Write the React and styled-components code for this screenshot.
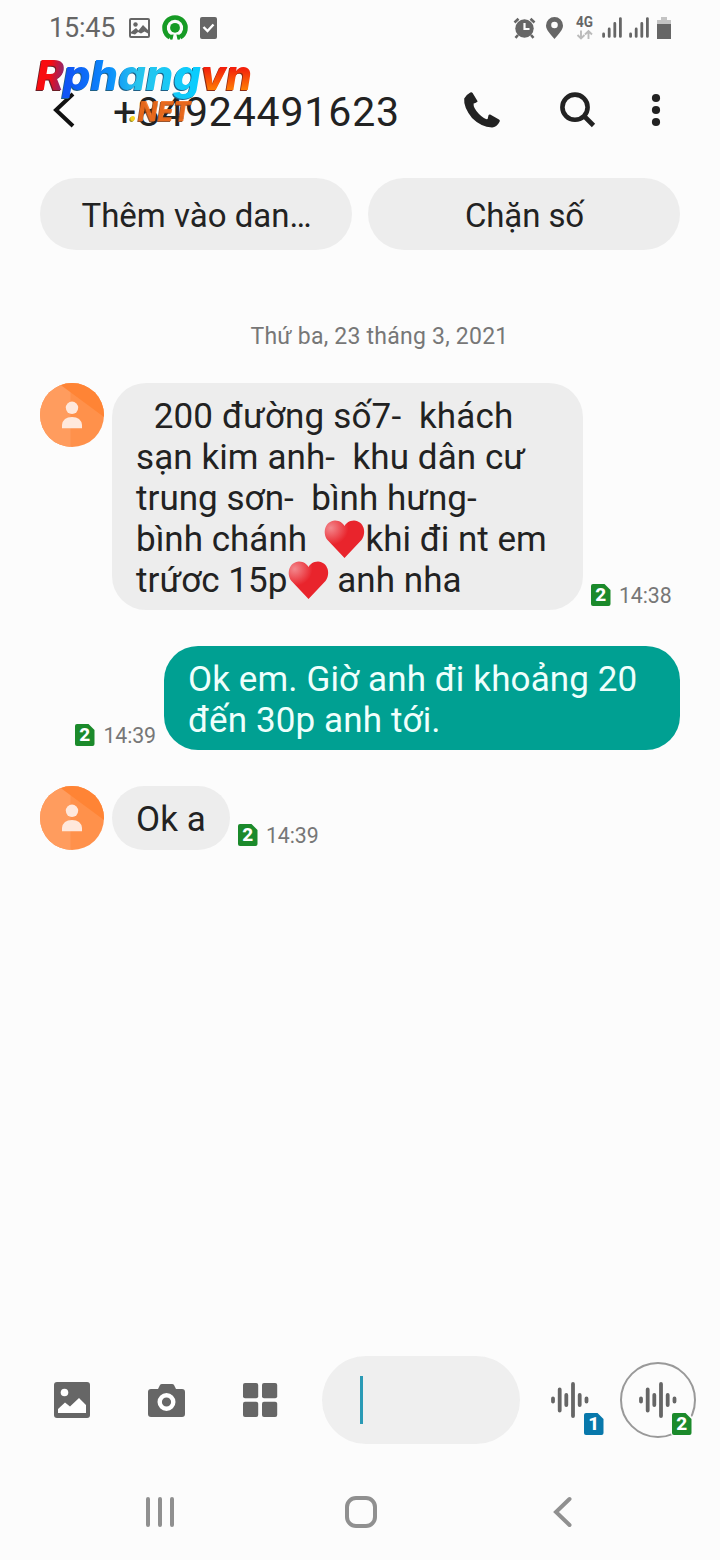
import styled, { createGlobalStyle } from "styled-components"

const GlobalStyle = createGlobalStyle`
    * { box-sizing: border-box; }
    body {
        margin: 0;
        background: #fcfcfc;
        font-family: Roboto, "Liberation Sans", sans-serif;
    }
    svg { display: block; flex: none; overflow: visible; }
    button {
        padding: 0;
        border: none;
        background: none;
        font: inherit;
        color: inherit;
    }
`

const Screen = styled.div`
    position: relative;
    width: 720px;
    height: 1560px;
    display: flex;
    flex-direction: column;
    background: #fcfcfc;
    color: #222;
    overflow: hidden;
`

const StatusBar = styled.div`
    height: 55px;
    padding: 0 46px 0 49px;
    display: flex;
    align-items: center;
    justify-content: space-between;
    color: #666;
`

const StatusGroup = styled.div`
    display: flex;
    align-items: center;
    gap: ${p => p.$gap}px;
`

const Clock = styled.span`
    width: 67px;
    margin-right: 1px;
    font-size: 27px;
    line-height: 32px;
    white-space: nowrap;
    letter-spacing: -0.2px;
`

const Header = styled.header`
    height: 108px;
    margin-top: 1px;
    padding: 0 60px 0 52px;
    display: flex;
    align-items: center;
`

const PhoneNumber = styled.h1`
    width: 348px;
    margin: 4px 0 0 38px;
    font-size: 41px;
    font-weight: 400;
    line-height: 48px;
    letter-spacing: 0.85px;
    white-space: nowrap;
`

const HeaderIcon = styled.button`
    height: 40px;
    margin-left: ${p => p.$left}px;
`

const Watermark = styled.svg`
    position: absolute;
    left: 30px;
    top: 54px;
`

const LogoText = styled.text`
    font-family: Inter, sans-serif;
    font-style: italic;
    font-weight: 800;
    filter: drop-shadow(-0.5px 1px 0 ${p => p.$edge});
`

const Actions = styled.div`
    margin-top: 14px;
    padding: 0 40px;
    display: flex;
    gap: 16px;
`

const ActionButton = styled.button`
    flex: 1;
    height: 72px;
    padding: 2px 0 0 1px;
    border-radius: 36px;
    background: #ededed;
    font-size: 33px;
    letter-spacing: ${p => p.$spacing || 0}px;
`

const Messages = styled.main`
    flex: 1;
    padding: 71px 40px 0;
    display: flex;
    flex-direction: column;
`

const DateLabel = styled.div`
    height: 32px;
    margin: 0 0 30px 39px;
    text-align: center;
    font-size: 23px;
    line-height: 32px;
    letter-spacing: 0.23px;
    color: #777;
`

const Row = styled.div`
    display: flex;
    align-items: flex-start;
    justify-content: ${p => (p.$mine ? "flex-end" : "flex-start")};
    gap: 8px;
    margin-bottom: 36px;
`

const Bubble = styled.div`
    width: ${p => p.$width}px;
    padding: 13px 0 ${p => p.$bottom || 9}px 24px;
    border-radius: 34px;
    background: ${p => (p.$mine ? "#00a092" : "#ededed")};
    color: ${p => (p.$mine ? "#effffc" : "#222")};
    font-size: 35px;
    line-height: 41px;
`

const Line = styled.div`
    height: 41px;
    display: flex;
    white-space: pre;
    letter-spacing: ${p => p.$spacing ?? 0.12}px;
`

const Meta = styled.div`
    align-self: flex-end;
    display: flex;
    align-items: center;
    gap: 8px;
    height: 26px;
    margin-bottom: 2px;
    font-size: 21.3px;
    line-height: 26px;
    letter-spacing: -0.1px;
    color: #777;

    span {
        padding-top: 1px;
    }
`

const Composer = styled.footer`
    height: 88px;
    margin-bottom: 20px;
    padding: 0 24px 0 53px;
    display: flex;
    align-items: center;
`

const Tools = styled.div`
    width: 269px;
    display: flex;
    align-items: center;
    gap: 57px;
`

const Input = styled.div`
    width: 198px;
    height: 88px;
    padding-left: 38px;
    display: flex;
    align-items: center;
    border-radius: 44px;
    background: #efefef;
`

const Caret = styled.span`
    width: 3px;
    height: 48px;
    background: #2a9ab5;
`

const SendButton = styled.button`
    position: relative;
    width: 76px;
    height: 76px;
    margin-left: 12px;
    display: flex;
    align-items: center;
    justify-content: center;
    border-radius: 50%;
    border: 2px solid ${p => (p.$ring ? "#999" : "transparent")};
`

const SendSim = styled.span`
    position: absolute;
    right: 1px;
    bottom: 0;
    background: #fcfcfc;
    padding: 1px;
    border-radius: 3px 9px 3px 3px;
`

const NavBar = styled.nav`
    height: 96px;
    padding-left: 145px;
    display: flex;
    align-items: center;
`

const NavButton = styled.button`
    margin-right: ${p => p.$gap || 0}px;
`

const SimBadge = ({ n }) => (
    <svg width="20" height="22" viewBox="0 0 20 22">
        <path d="M2 0H13.5L19.5 6V20Q19.5 22 17.5 22H2Q0 22 0 20V2Q0 0 2 0Z" fill={n === 1 ? "#0878ab" : "#1b8a2b"} />
        <text x="9.8" y="17.4" textAnchor="middle" fontSize="19" fontWeight="800" letterSpacing="0" fill="#fff">{n}</text>
    </svg>
)

const Avatar = ({ id }) => (
    <svg width="64" height="64" viewBox="0 0 64 64">
        <clipPath id={id}><circle cx="32" cy="32" r="32" /></clipPath>
        <g clipPath={`url(#${id})`}>
            <path d="M0 0H64V64H0Z" fill="#ff914b" />
            <path d="M0 0H20L30.5 8V64H0Z" fill="#ff9c5e" />
            <path d="M18 0H64V34Z" fill="#ff8435" />
        </g>
        <circle cx="32" cy="24.8" r="6.2" fill="#ffe8dc" />
        <path d="M22 45.2V42Q23 34 32 34T42 42V45.2Z" fill="#ffe8dc" />
    </svg>
)

const Heart = () => (
    <svg width="41" height="41" viewBox="0 0 41 41">
        <defs>
            <radialGradient id="heart" cx=".15" cy=".2" r=".45">
                <stop offset="0" stopColor="#f3888d" />
                <stop offset="1" stopColor="#e9242c" />
            </radialGradient>
        </defs>
        <path d="M20.5 39L3.5 21C-2 14 1 2 11 1.5C16 1.5 19 4.5 20.5 7C22 4.5 25 1.5 30 1.5C40 2 43 14 37.5 21Z" fill="url(#heart)" />
    </svg>
)

const Wave = () => (
    <svg width="38" height="36" viewBox="0 0 38 36" stroke="#666" strokeWidth="3.8" strokeLinecap="round">
        <path d="M2 16.5V19.5M8.7 7.5V28.5M15.3 13V23M22 2V34M28.7 13V23M35.5 16.5V19.5" />
    </svg>
)

const Signal = () => (
    <svg width="20" height="21" viewBox="0 0 20 21" stroke="#666" strokeWidth="2.8" strokeLinecap="round">
        <path d="M1.6 17V19.4M7.2 12V19.4M12.8 6.5V19.4M18.4 1.6V19.4" />
    </svg>
)

const LogoPart = ({ x, y, size, length, fill, edge, children }) => (
    <LogoText x={x} y={y} fontSize={size} textLength={length} lengthAdjust="spacingAndGlyphs" fill={fill} $edge={edge}>
        {children}
    </LogoText>
)

const Logo = () => (
    <Watermark width="230" height="76" viewBox="0 0 230 76">
        <defs>
            <linearGradient id="logo-r" gradientUnits="userSpaceOnUse" x1="6" y1="20" x2="35" y2="24">
                <stop offset="0.45" stopColor="#f80c10" />
                <stop offset="1" stopColor="#7d2b7c" />
            </linearGradient>
            <linearGradient id="logo-phang" gradientUnits="userSpaceOnUse" x1="32" y1="0" x2="170" y2="0">
                <stop offset="0.05" stopColor="#0f55f5" />
                <stop offset="0.35" stopColor="#0b90fb" />
                <stop offset="0.55" stopColor="#29c4ec" />
                <stop offset="1" stopColor="#08cdff" />
            </linearGradient>
            <linearGradient id="logo-vn" gradientUnits="userSpaceOnUse" x1="0" y1="14" x2="0" y2="37">
                <stop offset="0" stopColor="#f31f0c" />
                <stop offset="1" stopColor="#ff8204" />
            </linearGradient>
        </defs>
        <LogoPart x={6} y={36} size={41} length={28} fill="url(#logo-r)" edge="#6b1d24">R</LogoPart>
        <LogoPart x={33} y={36} size={41} length={138} fill="url(#logo-phang)" edge="#1d5f86">phang</LogoPart>
        <LogoPart x={171} y={36} size={41} length={51} fill="url(#logo-vn)" edge="#8f2c12">vn</LogoPart>
        <LogoPart x={99} y={67} size={27} length={9} fill="#f4d320" edge="#9a8a20">.</LogoPart>
        <LogoPart x={108} y={67} size={27} length={53} fill="#f26d1be0" edge="#8a3d12">NET</LogoPart>
    </Watermark>
)

const App = () => {
    return (
        <Screen>
            <GlobalStyle />
            <StatusBar>
                <StatusGroup $gap={12}>
                    <Clock>15:45</Clock>
                    <svg width="21" height="20" viewBox="0 0 21 20">
                        <rect x="1" y="1" width="19" height="18" rx="1" fill="none" stroke="#666" strokeWidth="2" />
                        <circle cx="6.5" cy="6.5" r="2.2" fill="#666" />
                        <path d="M2 14L7 10L9.5 12.5L14 7L19 12V15.5L15.5 13.5L12 15.5L9 14L6 16.5L2 15.5Z" fill="#666" />
                    </svg>
                    <svg width="26" height="26" viewBox="0 0 26 26">
                        <path d="M8 22.2A10.5 10.5 0 1 1 18 22.2" fill="none" stroke="#169b25" strokeWidth="4.6" />
                        <circle cx="13" cy="12.8" r="4.9" fill="#169b25" />
                        <path d="M6.5 20L11.6 19.5L10.5 24.5L8.5 24.8ZM19.5 20L14.4 19.5L15.5 24.5L17.5 24.8Z" fill="#169b25" />
                    </svg>
                    <svg width="18" height="22" viewBox="0 0 18 22">
                        <rect width="17" height="22" rx="2" fill="#666" />
                        <path d="M3.5 10L7.5 14L13.5 7.5" fill="none" stroke="#fff" strokeWidth="2.4" />
                    </svg>
                </StatusGroup>
                <StatusGroup $gap={7}>
                    <svg width="23" height="22" viewBox="0 0 23 22">
                        <path d="M1.5 5.5L5.5 1.7M21.5 5.5L17.5 1.7M5 18L2.5 20.8M18 18L20.5 20.8" stroke="#666" strokeWidth="2.6" />
                        <circle cx="11.5" cy="11.5" r="9.2" fill="#666" />
                        <path d="M11.5 6V12H16.5" fill="none" stroke="#fcfcfc" strokeWidth="2.2" />
                    </svg>
                    <svg width="26" height="22" viewBox="0 0 26 22">
                        <path d="M11.5 22C7.5 17 3 13 3 8.5A8.5 8.5 0 0 1 20 8.5C20 13 15.5 17 11.5 22Z" fill="#666" />
                        <circle cx="11.5" cy="8" r="3.3" fill="#fcfcfc" />
                    </svg>
                    <svg width="19" height="24" viewBox="0 0 19 24">
                        <text x="0" y="11" fontSize="14" fontWeight="700" fill="#666" textLength="17" lengthAdjust="spacingAndGlyphs">4G</text>
                        <path d="M5 14.5V22M1.5 19L5 22.5L8.5 19M12.5 23V15.5M9 18.5L12.5 15L16 18.5" fill="none" stroke="#bbb" strokeWidth="1.9" />
                    </svg>
                    <Signal />
                    <Signal />
                    <svg width="18" height="22" viewBox="0 0 18 22">
                        <path d="M5 0H11V3H15V7H1V3H5Z" fill="#c4c4c4" />
                        <path d="M1 7H15V22H1Z" fill="#666" />
                    </svg>
                </StatusGroup>
            </StatusBar>

            <Header>
                <HeaderIcon $left={0}>
                    <svg width="23" height="40" viewBox="0 0 23 40">
                        <path d="M21 4L4 20L21 36" fill="none" stroke="#111" strokeWidth="4" />
                    </svg>
                </HeaderIcon>
                <PhoneNumber>+84924491623</PhoneNumber>
                <HeaderIcon $left={3}>
                    <svg width="36" height="40" viewBox="0 0 36 40">
                        <path d="M6.3 2.6Q7.6 1.6 8.6 2.9L13.6 11.2Q13.6 12.2 9.6 13.6Q9 18 15 24Q21 30 23.6 29L24.6 25Q25.2 24 26.2 24.6L35 29.6Q36.4 30.6 35.6 31.8Q32.5 37.6 28 37.5Q17 37 8 28Q-.7 17 .2 8.5Q2 5 6.3 2.6Z" fill="#222" />
                    </svg>
                </HeaderIcon>
                <HeaderIcon $left={60}>
                    <svg width="36" height="40" viewBox="0 0 36 40">
                        <circle cx="15" cy="17.2" r="12.6" fill="none" stroke="#222" strokeWidth="4.6" />
                        <path d="M24 26L33.5 35.5" stroke="#222" strokeWidth="4.6" />
                    </svg>
                </HeaderIcon>
                <HeaderIcon $left={56}>
                    <svg width="8" height="40" viewBox="0 0 8 40" fill="#222">
                        <circle cx="4" cy="8" r="4.1" />
                        <circle cx="4" cy="20" r="4.1" />
                        <circle cx="4" cy="32" r="4.1" />
                    </svg>
                </HeaderIcon>
            </Header>
            <Logo />

            <Actions>
                <ActionButton>Thêm vào dan…</ActionButton>
                <ActionButton $spacing={-0.1}>Chặn số</ActionButton>
            </Actions>

            <Messages>
                <DateLabel>Thứ ba, 23 tháng 3, 2021</DateLabel>
                <Row>
                    <Avatar id="avatar-a" />
                    <Bubble $width={471}>
                        <Line $spacing={0.16}>{"  200 đường số7-  khách"}</Line>
                        <Line $spacing={0.08}>{"sạn kim anh-  khu dân cư"}</Line>
                        <Line $spacing={0.04}>{"trung sơn-  bình hưng-"}</Line>
                        <Line $spacing={0.02}>{"bình chánh  "}<Heart />khi đi nt em</Line>
                        <Line $spacing={0.06}>trứơc 15p<Heart />{" anh nha"}</Line>
                    </Bubble>
                    <Meta><SimBadge n={2} /><span>14:38</span></Meta>
                </Row>
                <Row $mine>
                    <Meta><SimBadge n={2} /><span>14:39</span></Meta>
                    <Bubble $mine $width={516}>
                        <Line>Ok em. Giờ anh đi khoảng 20</Line>
                        <Line>đến 30p anh tới.</Line>
                    </Bubble>
                </Row>
                <Row>
                    <Avatar id="avatar-b" />
                    <Bubble $width={118} $bottom={10}>
                        <Line>Ok a</Line>
                    </Bubble>
                    <Meta><SimBadge n={2} /><span>14:39</span></Meta>
                </Row>
            </Messages>

            <Composer>
                <Tools>
                    <svg width="38" height="38" viewBox="0 0 38 38">
                        <rect x="1" y="1" width="36" height="36" rx="3" fill="#666" />
                        <circle cx="11.5" cy="11.5" r="3.8" fill="#fff" />
                        <path d="M5 32V28L12 21.5L17 25.5L26 17L33 24V32Z" fill="#fff" />
                    </svg>
                    <svg width="38" height="38" viewBox="0 0 38 38">
                        <path d="M3 8H10L12 4Q12.5 3 14 3H24Q25.5 3 26 4L28 8H34Q37 8 37 11V33Q37 36 34 36H3Q0 36 0 33V11Q0 8 3 8Z" fill="#666" />
                        <circle cx="18.5" cy="21" r="6.8" fill="#666" stroke="#fff" strokeWidth="4.4" />
                    </svg>
                    <svg width="36" height="36" viewBox="0 0 36 36" fill="#666">
                        <rect x="0" y="1" width="15.2" height="15.2" rx="2" />
                        <rect x="19" y="1" width="15.2" height="15.2" rx="2" />
                        <rect x="0" y="19.8" width="15.2" height="15.2" rx="2" />
                        <rect x="19" y="19.8" width="15.2" height="15.2" rx="2" />
                    </svg>
                </Tools>
                <Input><Caret /></Input>
                <SendButton>
                    <Wave />
                    <SendSim><SimBadge n={1} /></SendSim>
                </SendButton>
                <SendButton $ring>
                    <Wave />
                    <SendSim><SimBadge n={2} /></SendSim>
                </SendButton>
            </Composer>

            <NavBar>
                <NavButton $gap={170}>
                    <svg width="30" height="32" viewBox="0 0 30 32" stroke="#909090" strokeWidth="4" strokeLinecap="round">
                        <path d="M3 3V29M15 3V29M27 3V29" />
                    </svg>
                </NavButton>
                <NavButton $gap={176}>
                    <svg width="32" height="32" viewBox="0 0 32 32">
                        <rect x="2" y="2" width="28" height="28" rx="9" fill="none" stroke="#909090" strokeWidth="4" />
                    </svg>
                </NavButton>
                <NavButton>
                    <svg width="20" height="32" viewBox="0 0 20 32">
                        <path d="M16.5 3L3 16L16.5 29" fill="none" stroke="#909090" strokeWidth="4" strokeLinecap="round" />
                    </svg>
                </NavButton>
            </NavBar>
        </Screen>
    )
}

export default App
